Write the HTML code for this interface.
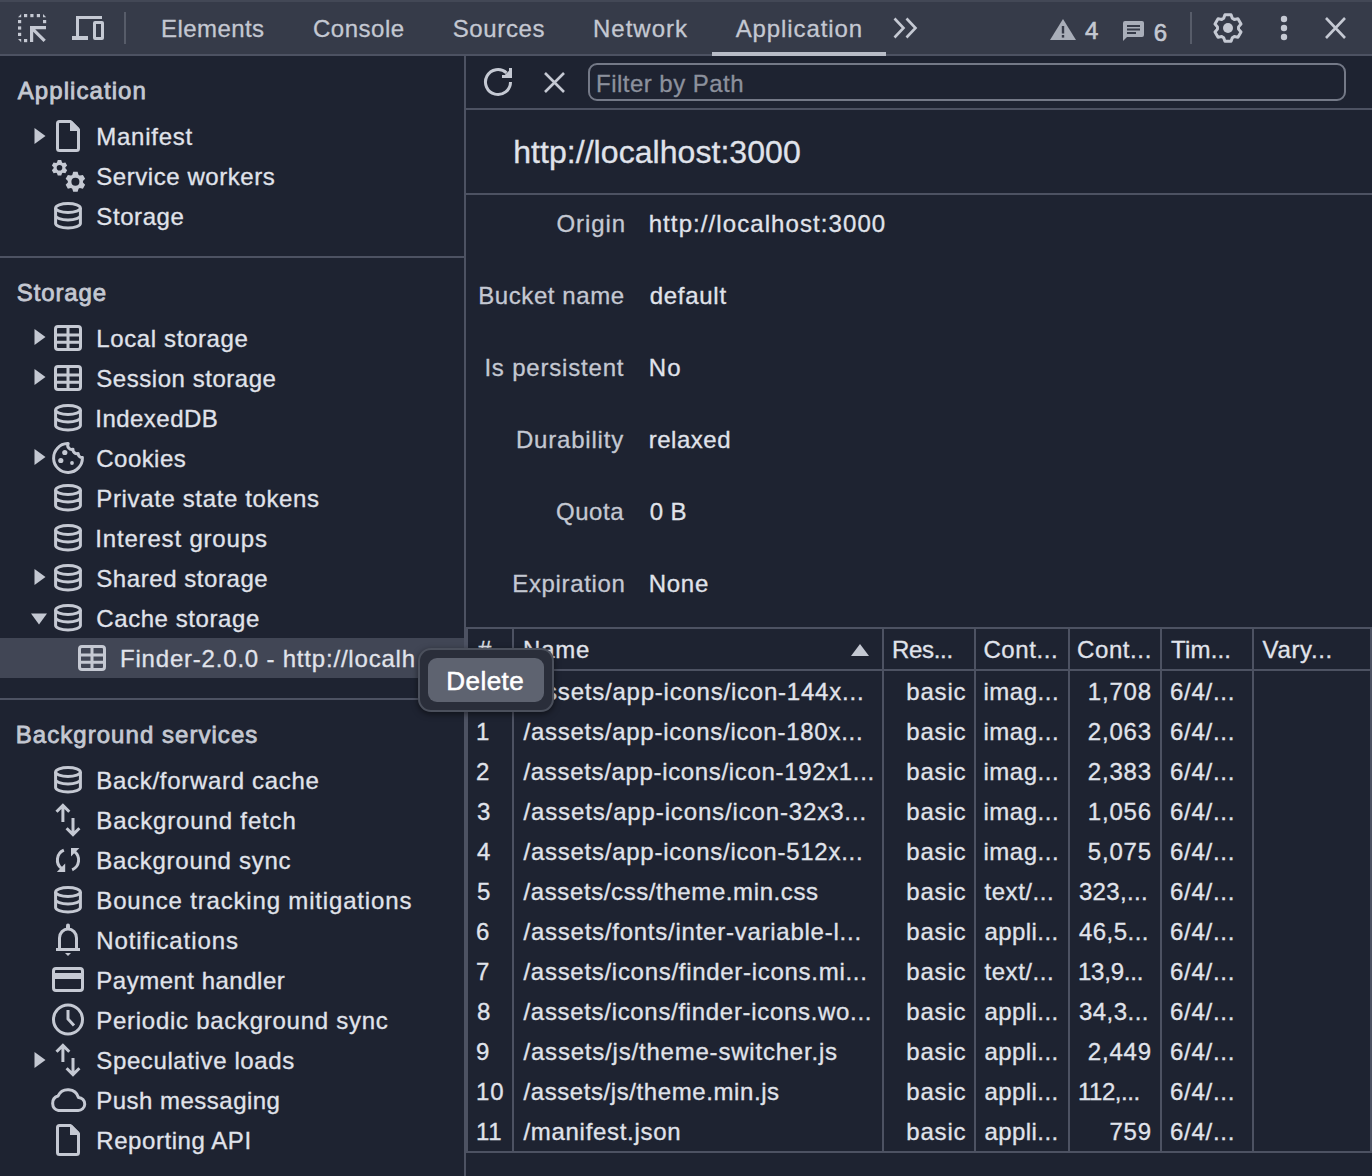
<!DOCTYPE html>
<html><head><meta charset="utf-8"><style>
*{margin:0;padding:0;box-sizing:border-box}
html,body{width:1372px;height:1176px;overflow:hidden;background:#1e2331;font-family:"Liberation Sans",sans-serif}
.a{position:absolute}
.t{white-space:pre;line-height:40px;-webkit-text-stroke:0.3px currentColor}
svg{display:block;overflow:visible}
</style></head><body>
<div class="a" style="left:0px;top:0px;width:1372px;height:54px;background:#363b49;"></div>
<div class="a" style="left:0px;top:0px;width:1372px;height:2px;background:#434856;"></div>
<div class="a" style="left:0px;top:54px;width:1372px;height:2px;background:#4d5262;"></div>
<svg class="a" style="left:18px;top:14px" width="28" height="28" viewBox="0 0 28 28"><g fill="#c5c9d3"><rect x="6" y="0" width="3.2" height="3.2"/><rect x="12.3" y="0" width="3.2" height="3.2"/><rect x="18.8" y="0" width="3.2" height="3.2"/><rect x="0" y="6" width="3.2" height="3.2"/><rect x="0" y="12.4" width="3.2" height="3.2"/><rect x="0" y="18.8" width="3.2" height="3.2"/><rect x="6" y="25" width="3.2" height="3.2"/><rect x="25" y="6" width="3.2" height="3.2"/><path d="M0 3.2 3.2 0V3.2Z"/><path d="M25 0 28.2 3.2H25Z"/><path d="M0 25H3.2V28.2Z"/><path d="M12 12H28V15.2H17.2L27.8 25.8 25.5 28.1 15.2 17.8V28H12Z"/></g></svg>
<svg class="a" style="left:72px;top:16px" width="32" height="24" viewBox="0 0 32 24"><g fill="#c5c9d3"><path d="M4 0H30V3H7V20H16V24H0V20H4Z"/><path d="M23 5H30Q32 5 32 7V22Q32 24 30 24H23Q21 24 21 22V7Q21 5 23 5ZM24 8V21H29V8Z"/></g></svg>
<div class="a" style="left:124px;top:12px;width:2px;height:32px;background:#575c69;"></div>
<div class="a t" style="left:161.00px;top:8.68px;font-size:24px;color:#c4c8d2;font-weight:400;letter-spacing:0.429px;">Elements</div>
<div class="a t" style="left:313.00px;top:8.68px;font-size:24px;color:#c4c8d2;font-weight:400;letter-spacing:0.5px;">Console</div>
<div class="a t" style="left:452.70px;top:8.68px;font-size:24px;color:#c4c8d2;font-weight:400;letter-spacing:0.633px;">Sources</div>
<div class="a t" style="left:593.00px;top:8.68px;font-size:24px;color:#c4c8d2;font-weight:400;letter-spacing:1.0px;">Network</div>
<div class="a t" style="left:735.70px;top:8.68px;font-size:24px;color:#c4c8d2;font-weight:400;letter-spacing:0.89px;">Application</div>
<div class="a" style="left:712px;top:52px;width:174px;height:4px;background:#b8bcc7;"></div>
<svg class="a" style="left:893px;top:17px" width="27" height="22" viewBox="0 0 27 22"><g fill="none" stroke="#c5c9d3" stroke-width="2.6" stroke-linejoin="miter"><path d="M1.5 1.5 10.5 11 1.5 20.5"/><path d="M13.5 1.5 22.5 11 13.5 20.5"/></g></svg>
<svg class="a" style="left:1050px;top:19px" width="26" height="21" viewBox="0 0 26 21"><path fill="#a9aeb9" d="M13 0 26 21H0Z"/><rect x="11.8" y="7" width="2.4" height="7.5" fill="#363b49"/><rect x="11.8" y="16" width="2.4" height="2.6" fill="#363b49"/></svg>
<div class="a t" style="left:1085.00px;top:10.68px;font-size:24px;color:#c4c8d2;font-weight:400;letter-spacing:0.8px;-webkit-text-stroke:0.6px currentColor;">4</div>
<svg class="a" style="left:1123px;top:21px" width="21" height="20" viewBox="0 0 21 20"><path fill="#a9aeb9" d="M2 0H19Q21 0 21 2V14Q21 16 19 16H4L0 20V2Q0 0 2 0Z"/><g fill="#363b49"><rect x="4" y="4" width="13" height="2"/><rect x="4" y="7.5" width="13" height="2"/><rect x="4" y="11" width="9" height="2"/></g></svg>
<div class="a t" style="left:1153.70px;top:12.68px;font-size:24px;color:#c4c8d2;font-weight:400;letter-spacing:0.8px;-webkit-text-stroke:0.6px currentColor;">6</div>
<div class="a" style="left:1190px;top:12px;width:2px;height:32px;background:#575c69;"></div>
<svg class="a" style="left:1212px;top:12px" width="32" height="32" viewBox="0 0 32 32"><path fill="none" stroke="#c5c9d3" stroke-width="3" stroke-linejoin="round" d="M11.69 6.32 L12.94 2.75 L19.06 2.75 L20.31 6.32 L22.23 7.42 L25.95 6.72 L29.01 12.02 L26.54 14.89 L26.54 17.11 L29.01 19.98 L25.95 25.28 L22.23 24.58 L20.31 25.68 L19.06 29.25 L12.94 29.25 L11.69 25.68 L9.77 24.58 L6.05 25.28 L2.99 19.98 L5.46 17.11 L5.46 14.89 L2.99 12.02 L6.05 6.72 L9.77 7.42 Z"/><circle cx="16" cy="16" r="5" fill="#c5c9d3"/></svg>
<svg class="a" style="left:1280px;top:15px" width="8" height="26" viewBox="0 0 8 26"><g fill="#c5c9d3"><circle cx="4" cy="4" r="3.2"/><circle cx="4" cy="13" r="3.2"/><circle cx="4" cy="22" r="3.2"/></g></svg>
<svg class="a" style="left:1324px;top:17px" width="23" height="22" viewBox="0 0 23 22"><path stroke="#c5c9d3" stroke-width="2.6" d="M2 1 21 21M21 1 2 21"/></svg>
<div class="a" style="left:0px;top:256px;width:464px;height:2px;background:#4d5262;"></div>
<div class="a" style="left:0px;top:698px;width:464px;height:2px;background:#4d5262;"></div>
<div class="a" style="left:0px;top:638px;width:464px;height:40px;background:#414655;"></div>
<div class="a" style="left:464px;top:56px;width:2px;height:1120px;background:#4d5262;"></div>
<div class="a t" style="left:17.80px;top:70.68px;font-size:24px;color:#c4c8d2;font-weight:400;letter-spacing:1.06px;-webkit-text-stroke:0.8px currentColor;">Application</div>
<svg class="a" style="left:33.6px;top:128px" width="12" height="16" viewBox="0 0 12 16"><path fill="#c4c8d2" d="M0.5 0 11.5 8 0.5 16Z"/></svg>
<svg class="a" style="left:56px;top:120px" width="24" height="32" viewBox="0 0 24 32"><path fill="none" stroke="#c5c9d3" stroke-width="3" stroke-linejoin="round" d="M3.5 1.5H14.5L22.5 9.5V28.5Q22.5 30.5 20.5 30.5H3.5Q1.5 30.5 1.5 28.5V3.5Q1.5 1.5 3.5 1.5Z"/><path fill="#c5c9d3" d="M14 1H16L23 8V11H14Z"/></svg>
<div class="a t" style="left:96.30px;top:116.68px;font-size:24px;color:#e0e3eb;font-weight:400;letter-spacing:0.743px;">Manifest</div>
<svg class="a" style="left:50px;top:158px" width="38" height="36" viewBox="0 0 38 36"><g fill="#c5c9d3" fill-rule="evenodd"><path d="M6.96 4.47 L7.77 1.99 L11.23 1.99 L12.04 4.47 L12.84 4.94 L15.40 4.40 L17.13 7.39 L15.38 9.34 L15.38 10.26 L17.13 12.21 L15.40 15.20 L12.84 14.66 L12.04 15.13 L11.23 17.61 L7.77 17.61 L6.96 15.13 L6.16 14.66 L3.60 15.20 L1.87 12.21 L3.62 10.26 L3.62 9.34 L1.87 7.39 L3.60 4.40 L6.16 4.94 Z M12.30 9.80 A2.8 2.8 0 1 0 6.70 9.80 A2.8 2.8 0 1 0 12.30 9.80 Z"/><path d="M22.25 16.88 L23.19 13.84 L27.61 13.84 L28.55 16.88 L29.81 17.61 L32.92 16.91 L35.13 20.73 L32.97 23.07 L32.97 24.53 L35.13 26.87 L32.92 30.69 L29.81 29.99 L28.55 30.72 L27.61 33.76 L23.19 33.76 L22.25 30.72 L20.99 29.99 L17.88 30.69 L15.67 26.87 L17.83 24.53 L17.83 23.07 L15.67 20.73 L17.88 16.91 L20.99 17.61 Z M29.40 23.80 A4.0 4.0 0 1 0 21.40 23.80 A4.0 4.0 0 1 0 29.40 23.80 Z"/></g></svg>
<div class="a t" style="left:96.30px;top:156.68px;font-size:24px;color:#e0e3eb;font-weight:400;letter-spacing:0.55px;">Service workers</div>
<svg class="a" style="left:54px;top:202px" width="28" height="28" viewBox="0 0 28 28"><g fill="none" stroke="#c5c9d3" stroke-width="3"><ellipse cx="14" cy="6" rx="12.4" ry="4.4"/><path d="M1.6 6V21.5A12.4 4.4 0 0 0 26.4 21.5V6M1.6 13.5A12.4 4.4 0 0 0 26.4 13.5"/></g></svg>
<div class="a t" style="left:96.30px;top:196.68px;font-size:24px;color:#e0e3eb;font-weight:400;letter-spacing:0.583px;">Storage</div>
<div class="a t" style="left:16.80px;top:272.68px;font-size:24px;color:#c4c8d2;font-weight:400;letter-spacing:0.883px;-webkit-text-stroke:0.8px currentColor;">Storage</div>
<svg class="a" style="left:33.6px;top:329px" width="12" height="16" viewBox="0 0 12 16"><path fill="#c4c8d2" d="M0.5 0 11.5 8 0.5 16Z"/></svg>
<svg class="a" style="left:54px;top:325px" width="28" height="26" viewBox="0 0 28 26"><g fill="none" stroke="#c5c9d3" stroke-width="3"><rect x="1.5" y="1.5" width="25" height="23" rx="2.5"/><path d="M14 2V25M2 10H26M2 17.3H26"/></g></svg>
<div class="a t" style="left:96.30px;top:318.68px;font-size:24px;color:#e0e3eb;font-weight:400;letter-spacing:0.625px;">Local storage</div>
<svg class="a" style="left:33.6px;top:369px" width="12" height="16" viewBox="0 0 12 16"><path fill="#c4c8d2" d="M0.5 0 11.5 8 0.5 16Z"/></svg>
<svg class="a" style="left:54px;top:365px" width="28" height="26" viewBox="0 0 28 26"><g fill="none" stroke="#c5c9d3" stroke-width="3"><rect x="1.5" y="1.5" width="25" height="23" rx="2.5"/><path d="M14 2V25M2 10H26M2 17.3H26"/></g></svg>
<div class="a t" style="left:96.30px;top:358.68px;font-size:24px;color:#e0e3eb;font-weight:400;letter-spacing:0.536px;">Session storage</div>
<svg class="a" style="left:54px;top:404px" width="28" height="28" viewBox="0 0 28 28"><g fill="none" stroke="#c5c9d3" stroke-width="3"><ellipse cx="14" cy="6" rx="12.4" ry="4.4"/><path d="M1.6 6V21.5A12.4 4.4 0 0 0 26.4 21.5V6M1.6 13.5A12.4 4.4 0 0 0 26.4 13.5"/></g></svg>
<div class="a t" style="left:95.30px;top:398.68px;font-size:24px;color:#e0e3eb;font-weight:400;letter-spacing:0.463px;">IndexedDB</div>
<svg class="a" style="left:33.6px;top:449px" width="12" height="16" viewBox="0 0 12 16"><path fill="#c4c8d2" d="M0.5 0 11.5 8 0.5 16Z"/></svg>
<svg class="a" style="left:52px;top:442px" width="32" height="32" viewBox="0 0 32 32"><g fill="none" stroke="#c5c9d3" stroke-width="3"><path d="M15.5 1.6A14.4 14.4 0 1 0 30.4 15.6 4 4 0 0 1 26.2 11.5 4 4 0 0 1 21 7.2 4 4 0 0 1 16.2 1.6Z" stroke-linejoin="round"/></g><g fill="#c5c9d3"><circle cx="12.8" cy="10.5" r="2.6"/><circle cx="8.8" cy="18.5" r="2.6"/><circle cx="20" cy="21" r="1.9"/></g></svg>
<div class="a t" style="left:96.30px;top:438.68px;font-size:24px;color:#e0e3eb;font-weight:400;letter-spacing:0.45px;">Cookies</div>
<svg class="a" style="left:54px;top:484px" width="28" height="28" viewBox="0 0 28 28"><g fill="none" stroke="#c5c9d3" stroke-width="3"><ellipse cx="14" cy="6" rx="12.4" ry="4.4"/><path d="M1.6 6V21.5A12.4 4.4 0 0 0 26.4 21.5V6M1.6 13.5A12.4 4.4 0 0 0 26.4 13.5"/></g></svg>
<div class="a t" style="left:96.30px;top:478.68px;font-size:24px;color:#e0e3eb;font-weight:400;letter-spacing:0.632px;">Private state tokens</div>
<svg class="a" style="left:54px;top:524px" width="28" height="28" viewBox="0 0 28 28"><g fill="none" stroke="#c5c9d3" stroke-width="3"><ellipse cx="14" cy="6" rx="12.4" ry="4.4"/><path d="M1.6 6V21.5A12.4 4.4 0 0 0 26.4 21.5V6M1.6 13.5A12.4 4.4 0 0 0 26.4 13.5"/></g></svg>
<div class="a t" style="left:95.30px;top:518.68px;font-size:24px;color:#e0e3eb;font-weight:400;letter-spacing:0.821px;">Interest groups</div>
<svg class="a" style="left:33.6px;top:569px" width="12" height="16" viewBox="0 0 12 16"><path fill="#c4c8d2" d="M0.5 0 11.5 8 0.5 16Z"/></svg>
<svg class="a" style="left:54px;top:564px" width="28" height="28" viewBox="0 0 28 28"><g fill="none" stroke="#c5c9d3" stroke-width="3"><ellipse cx="14" cy="6" rx="12.4" ry="4.4"/><path d="M1.6 6V21.5A12.4 4.4 0 0 0 26.4 21.5V6M1.6 13.5A12.4 4.4 0 0 0 26.4 13.5"/></g></svg>
<div class="a t" style="left:96.30px;top:558.68px;font-size:24px;color:#e0e3eb;font-weight:400;letter-spacing:0.562px;">Shared storage</div>
<svg class="a" style="left:31px;top:613px" width="16" height="12" viewBox="0 0 16 12"><path fill="#c4c8d2" d="M0 0.5H16L8 11.5Z"/></svg>
<svg class="a" style="left:54px;top:604px" width="28" height="28" viewBox="0 0 28 28"><g fill="none" stroke="#c5c9d3" stroke-width="3"><ellipse cx="14" cy="6" rx="12.4" ry="4.4"/><path d="M1.6 6V21.5A12.4 4.4 0 0 0 26.4 21.5V6M1.6 13.5A12.4 4.4 0 0 0 26.4 13.5"/></g></svg>
<div class="a t" style="left:96.30px;top:598.68px;font-size:24px;color:#e0e3eb;font-weight:400;letter-spacing:0.575px;">Cache storage</div>
<svg class="a" style="left:78px;top:645px" width="28" height="26" viewBox="0 0 28 26"><g fill="none" stroke="#c5c9d3" stroke-width="3"><rect x="1.5" y="1.5" width="25" height="23" rx="2.5"/><path d="M14 2V25M2 10H26M2 17.3H26"/></g></svg>
<div class="a t" style="left:120.00px;top:638.68px;font-size:24px;color:#e0e3eb;font-weight:400;letter-spacing:0.8px;">Finder-2.0.0 - http://localh</div>
<div class="a t" style="left:15.80px;top:714.68px;font-size:24px;color:#c4c8d2;font-weight:400;letter-spacing:1.039px;-webkit-text-stroke:0.8px currentColor;">Background services</div>
<svg class="a" style="left:54px;top:766px" width="28" height="28" viewBox="0 0 28 28"><g fill="none" stroke="#c5c9d3" stroke-width="3"><ellipse cx="14" cy="6" rx="12.4" ry="4.4"/><path d="M1.6 6V21.5A12.4 4.4 0 0 0 26.4 21.5V6M1.6 13.5A12.4 4.4 0 0 0 26.4 13.5"/></g></svg>
<div class="a t" style="left:96.30px;top:760.68px;font-size:24px;color:#e0e3eb;font-weight:400;letter-spacing:0.7px;">Back/forward cache</div>
<svg class="a" style="left:50px;top:800px" width="36" height="40" viewBox="0 0 36 40"><g fill="none" stroke="#c5c9d3" stroke-width="3"><path d="M12.9 22V6M6.5 11.8 12.9 5.4 19.3 11.8"/><path d="M23 18V34M16.6 28.2 23 34.6 29.4 28.2"/></g></svg>
<div class="a t" style="left:96.30px;top:800.68px;font-size:24px;color:#e0e3eb;font-weight:400;letter-spacing:0.847px;">Background fetch</div>
<svg class="a" style="left:50px;top:842px" width="36" height="36" viewBox="0 0 36 36"><g fill="none" stroke="#c5c9d3" stroke-width="3"><path d="M13.86 8.24 A10.6 10.6 0 0 0 11.47 26.35"/><path d="M22.14 27.76 A10.6 10.6 0 0 0 24.53 9.65"/></g><g fill="#c5c9d3"><path d="M6.8 30H15.2V21.6Z"/><path d="M21 6H29.4L21 14.4Z"/></g></svg>
<div class="a t" style="left:96.30px;top:840.68px;font-size:24px;color:#e0e3eb;font-weight:400;letter-spacing:0.721px;">Background sync</div>
<svg class="a" style="left:54px;top:886px" width="28" height="28" viewBox="0 0 28 28"><g fill="none" stroke="#c5c9d3" stroke-width="3"><ellipse cx="14" cy="6" rx="12.4" ry="4.4"/><path d="M1.6 6V21.5A12.4 4.4 0 0 0 26.4 21.5V6M1.6 13.5A12.4 4.4 0 0 0 26.4 13.5"/></g></svg>
<div class="a t" style="left:96.30px;top:880.68px;font-size:24px;color:#e0e3eb;font-weight:400;letter-spacing:0.831px;">Bounce tracking mitigations</div>
<svg class="a" style="left:55px;top:923px" width="26" height="33" viewBox="0 0 26 33"><g fill="none" stroke="#c5c9d3" stroke-width="3"><path d="M4.5 26V15A8.5 9 0 0 1 21.5 15V26"/><path d="M1 26.5H25"/></g><g fill="#c5c9d3"><rect x="11" y="0.5" width="4" height="6" rx="2"/><path d="M10 30H16L13 33Z"/></g></svg>
<div class="a t" style="left:96.30px;top:920.68px;font-size:24px;color:#e0e3eb;font-weight:400;letter-spacing:0.908px;">Notifications</div>
<svg class="a" style="left:52px;top:967px" width="32" height="25" viewBox="0 0 32 25"><g fill="none" stroke="#c5c9d3" stroke-width="3"><rect x="1.5" y="1.5" width="29" height="22" rx="2.5"/></g><rect x="2" y="6" width="28" height="6" fill="#c5c9d3"/></svg>
<div class="a t" style="left:96.30px;top:960.68px;font-size:24px;color:#e0e3eb;font-weight:400;letter-spacing:0.5px;">Payment handler</div>
<svg class="a" style="left:52px;top:1003px" width="32" height="33" viewBox="0 0 32 33"><g fill="none" stroke="#c5c9d3" stroke-width="3"><circle cx="16" cy="16.5" r="14.5"/><path d="M16 7V16L22 22.5"/></g></svg>
<div class="a t" style="left:96.30px;top:1000.68px;font-size:24px;color:#e0e3eb;font-weight:400;letter-spacing:0.722px;">Periodic background sync</div>
<svg class="a" style="left:33.6px;top:1052px" width="12" height="16" viewBox="0 0 12 16"><path fill="#c4c8d2" d="M0.5 0 11.5 8 0.5 16Z"/></svg>
<svg class="a" style="left:50px;top:1040px" width="36" height="40" viewBox="0 0 36 40"><g fill="none" stroke="#c5c9d3" stroke-width="3"><path d="M12.9 22V6M6.5 11.8 12.9 5.4 19.3 11.8"/><path d="M23 18V34M16.6 28.2 23 34.6 29.4 28.2"/></g></svg>
<div class="a t" style="left:96.30px;top:1040.68px;font-size:24px;color:#e0e3eb;font-weight:400;letter-spacing:0.613px;">Speculative loads</div>
<svg class="a" style="left:50px;top:1087px" width="36" height="25" viewBox="0 0 36 25"><path fill="none" stroke="#c5c9d3" stroke-width="3" stroke-linejoin="round" d="M8.5 23.5H28A6.5 6.5 0 0 0 28.5 10.5 11 11 0 0 0 8 9 7.5 7.5 0 0 0 8.5 23.5Z"/></svg>
<div class="a t" style="left:96.30px;top:1080.68px;font-size:24px;color:#e0e3eb;font-weight:400;letter-spacing:0.477px;">Push messaging</div>
<svg class="a" style="left:56px;top:1124px" width="24" height="32" viewBox="0 0 24 32"><path fill="none" stroke="#c5c9d3" stroke-width="3" stroke-linejoin="round" d="M3.5 1.5H14.5L22.5 9.5V28.5Q22.5 30.5 20.5 30.5H3.5Q1.5 30.5 1.5 28.5V3.5Q1.5 1.5 3.5 1.5Z"/><path fill="#c5c9d3" d="M14 1H16L23 8V11H14Z"/></svg>
<div class="a t" style="left:96.30px;top:1120.68px;font-size:24px;color:#e0e3eb;font-weight:400;letter-spacing:0.558px;">Reporting API</div>
<div class="a" style="left:466px;top:108px;width:906px;height:2px;background:#4d5262;"></div>
<svg class="a" style="left:482px;top:66px" width="32" height="32" viewBox="0 0 32 32"><path fill="none" stroke="#c5c9d3" stroke-width="3" d="M28.5 16A12.5 12.5 0 1 1 24.5 6.86"/><path fill="#c5c9d3" d="M27 2H30V12H20V9H22.8L27 4.8Z"/></svg>
<svg class="a" style="left:543px;top:71px" width="23" height="23" viewBox="0 0 23 23"><path stroke="#c5c9d3" stroke-width="2.6" d="M2 2 21 21M21 2 2 21"/></svg>
<div class="a" style="left:588px;top:63px;width:758px;height:38px;border:2px solid #747987;border-radius:9px"></div>
<div class="a t" style="left:596.00px;top:63.68px;font-size:24px;color:#8c919d;font-weight:400;letter-spacing:0.477px;">Filter by Path</div>
<div class="a t" style="left:513.20px;top:131.91px;font-size:32px;color:#e0e3eb;font-weight:400;letter-spacing:0.055px;">http://localhost:3000</div>
<div class="a" style="left:466px;top:193px;width:906px;height:2px;background:#4d5262;"></div>
<div class="a t" style="left:556.40px;top:203.68px;font-size:24px;color:#c4c8d2;font-weight:400;letter-spacing:0.94px;">Origin</div>
<div class="a t" style="left:648.70px;top:203.68px;font-size:24px;color:#e0e3eb;font-weight:400;letter-spacing:1.085px;">http://localhost:3000</div>
<div class="a t" style="left:478.20px;top:275.68px;font-size:24px;color:#c4c8d2;font-weight:400;letter-spacing:0.59px;">Bucket name</div>
<div class="a t" style="left:649.70px;top:275.68px;font-size:24px;color:#e0e3eb;font-weight:400;letter-spacing:0.717px;">default</div>
<div class="a t" style="left:484.40px;top:347.68px;font-size:24px;color:#c4c8d2;font-weight:400;letter-spacing:0.808px;">Is persistent</div>
<div class="a t" style="left:648.70px;top:347.68px;font-size:24px;color:#e0e3eb;font-weight:400;letter-spacing:1.3px;">No</div>
<div class="a t" style="left:516.00px;top:419.68px;font-size:24px;color:#c4c8d2;font-weight:400;letter-spacing:0.789px;">Durability</div>
<div class="a t" style="left:648.70px;top:419.68px;font-size:24px;color:#e0e3eb;font-weight:400;letter-spacing:0.517px;">relaxed</div>
<div class="a t" style="left:556.00px;top:491.68px;font-size:24px;color:#c4c8d2;font-weight:400;letter-spacing:0.525px;">Quota</div>
<div class="a t" style="left:649.70px;top:491.68px;font-size:24px;color:#e0e3eb;font-weight:400;letter-spacing:0.35px;">0 B</div>
<div class="a t" style="left:512.30px;top:563.68px;font-size:24px;color:#c4c8d2;font-weight:400;letter-spacing:0.644px;">Expiration</div>
<div class="a t" style="left:648.70px;top:563.68px;font-size:24px;color:#e0e3eb;font-weight:400;letter-spacing:0.733px;">None</div>
<div class="a" style="left:466px;top:627px;width:906px;height:2px;background:#4d5262;"></div>
<div class="a" style="left:466px;top:669px;width:906px;height:2px;background:#4d5262;"></div>
<div class="a" style="left:466px;top:1151px;width:906px;height:2px;background:#4d5262;"></div>
<div class="a" style="left:466px;top:627px;width:2px;height:526px;background:#4d5262;"></div>
<div class="a" style="left:1370px;top:627px;width:2px;height:526px;background:#4d5262;"></div>
<div class="a" style="left:512px;top:629px;width:2px;height:522px;background:#4d5262;"></div>
<div class="a" style="left:882px;top:629px;width:2px;height:522px;background:#4d5262;"></div>
<div class="a" style="left:974px;top:629px;width:2px;height:522px;background:#4d5262;"></div>
<div class="a" style="left:1068px;top:629px;width:2px;height:522px;background:#4d5262;"></div>
<div class="a" style="left:1160px;top:629px;width:2px;height:522px;background:#4d5262;"></div>
<div class="a" style="left:1252px;top:629px;width:2px;height:522px;background:#4d5262;"></div>
<div class="a t" style="left:478.00px;top:629.68px;font-size:24px;color:#e0e3eb;font-weight:400;letter-spacing:0.8px;">#</div>
<div class="a t" style="left:523.00px;top:629.68px;font-size:24px;color:#e0e3eb;font-weight:400;letter-spacing:0.8px;">Name</div>
<svg class="a" style="left:851px;top:644px" width="18" height="12" viewBox="0 0 18 12"><path fill="#c4c8d2" d="M9 0 18 12H0Z"/></svg>
<div class="a t" style="left:892.00px;top:629.68px;font-size:24px;color:#e0e3eb;font-weight:400;letter-spacing:-0.32px;">Res...</div>
<div class="a t" style="left:983.40px;top:629.68px;font-size:24px;color:#e0e3eb;font-weight:400;letter-spacing:0.6px;">Cont...</div>
<div class="a t" style="left:1077.00px;top:629.68px;font-size:24px;color:#e0e3eb;font-weight:400;letter-spacing:0.6px;">Cont...</div>
<div class="a t" style="left:1171.00px;top:629.68px;font-size:24px;color:#e0e3eb;font-weight:400;letter-spacing:0.18px;">Tim...</div>
<div class="a t" style="left:1262.60px;top:629.68px;font-size:24px;color:#e0e3eb;font-weight:400;letter-spacing:0.633px;">Vary...</div>
<div class="a t" style="left:477.00px;top:671.68px;font-size:24px;color:#e0e3eb;font-weight:400;letter-spacing:0.8px;">0</div>
<div class="a t" style="left:523.50px;top:671.68px;font-size:24px;color:#e0e3eb;font-weight:400;letter-spacing:0.779px;">/assets/app-icons/icon-144x...</div>
<div class="a t" style="left:906.30px;top:671.68px;font-size:24px;color:#e0e3eb;font-weight:400;letter-spacing:0.8px;">basic</div>
<div class="a t" style="left:983.50px;top:671.68px;font-size:24px;color:#e0e3eb;font-weight:400;letter-spacing:0.517px;">imag...</div>
<div class="a t" style="left:1087.80px;top:671.68px;font-size:24px;color:#e0e3eb;font-weight:400;letter-spacing:0.8px;">1,708</div>
<div class="a t" style="left:1170.00px;top:671.68px;font-size:24px;color:#e0e3eb;font-weight:400;letter-spacing:0.733px;">6/4/...</div>
<div class="a t" style="left:476.00px;top:711.68px;font-size:24px;color:#e0e3eb;font-weight:400;letter-spacing:0.8px;">1</div>
<div class="a t" style="left:523.50px;top:711.68px;font-size:24px;color:#e0e3eb;font-weight:400;letter-spacing:0.748px;">/assets/app-icons/icon-180x...</div>
<div class="a t" style="left:906.30px;top:711.68px;font-size:24px;color:#e0e3eb;font-weight:400;letter-spacing:0.8px;">basic</div>
<div class="a t" style="left:983.50px;top:711.68px;font-size:24px;color:#e0e3eb;font-weight:400;letter-spacing:0.517px;">imag...</div>
<div class="a t" style="left:1087.80px;top:711.68px;font-size:24px;color:#e0e3eb;font-weight:400;letter-spacing:0.8px;">2,063</div>
<div class="a t" style="left:1170.00px;top:711.68px;font-size:24px;color:#e0e3eb;font-weight:400;letter-spacing:0.733px;">6/4/...</div>
<div class="a t" style="left:476.00px;top:751.68px;font-size:24px;color:#e0e3eb;font-weight:400;letter-spacing:0.8px;">2</div>
<div class="a t" style="left:523.50px;top:751.68px;font-size:24px;color:#e0e3eb;font-weight:400;letter-spacing:0.66px;">/assets/app-icons/icon-192x1...</div>
<div class="a t" style="left:906.30px;top:751.68px;font-size:24px;color:#e0e3eb;font-weight:400;letter-spacing:0.8px;">basic</div>
<div class="a t" style="left:983.50px;top:751.68px;font-size:24px;color:#e0e3eb;font-weight:400;letter-spacing:0.517px;">imag...</div>
<div class="a t" style="left:1087.80px;top:751.68px;font-size:24px;color:#e0e3eb;font-weight:400;letter-spacing:0.8px;">2,383</div>
<div class="a t" style="left:1170.00px;top:751.68px;font-size:24px;color:#e0e3eb;font-weight:400;letter-spacing:0.733px;">6/4/...</div>
<div class="a t" style="left:477.00px;top:791.68px;font-size:24px;color:#e0e3eb;font-weight:400;letter-spacing:0.8px;">3</div>
<div class="a t" style="left:523.50px;top:791.68px;font-size:24px;color:#e0e3eb;font-weight:400;letter-spacing:0.866px;">/assets/app-icons/icon-32x3...</div>
<div class="a t" style="left:906.30px;top:791.68px;font-size:24px;color:#e0e3eb;font-weight:400;letter-spacing:0.8px;">basic</div>
<div class="a t" style="left:983.50px;top:791.68px;font-size:24px;color:#e0e3eb;font-weight:400;letter-spacing:0.517px;">imag...</div>
<div class="a t" style="left:1087.80px;top:791.68px;font-size:24px;color:#e0e3eb;font-weight:400;letter-spacing:0.8px;">1,056</div>
<div class="a t" style="left:1170.00px;top:791.68px;font-size:24px;color:#e0e3eb;font-weight:400;letter-spacing:0.733px;">6/4/...</div>
<div class="a t" style="left:477.00px;top:831.68px;font-size:24px;color:#e0e3eb;font-weight:400;letter-spacing:0.8px;">4</div>
<div class="a t" style="left:523.50px;top:831.68px;font-size:24px;color:#e0e3eb;font-weight:400;letter-spacing:0.748px;">/assets/app-icons/icon-512x...</div>
<div class="a t" style="left:906.30px;top:831.68px;font-size:24px;color:#e0e3eb;font-weight:400;letter-spacing:0.8px;">basic</div>
<div class="a t" style="left:983.50px;top:831.68px;font-size:24px;color:#e0e3eb;font-weight:400;letter-spacing:0.517px;">imag...</div>
<div class="a t" style="left:1087.80px;top:831.68px;font-size:24px;color:#e0e3eb;font-weight:400;letter-spacing:0.8px;">5,075</div>
<div class="a t" style="left:1170.00px;top:831.68px;font-size:24px;color:#e0e3eb;font-weight:400;letter-spacing:0.733px;">6/4/...</div>
<div class="a t" style="left:477.00px;top:871.68px;font-size:24px;color:#e0e3eb;font-weight:400;letter-spacing:0.8px;">5</div>
<div class="a t" style="left:523.50px;top:871.68px;font-size:24px;color:#e0e3eb;font-weight:400;letter-spacing:0.604px;">/assets/css/theme.min.css</div>
<div class="a t" style="left:906.30px;top:871.68px;font-size:24px;color:#e0e3eb;font-weight:400;letter-spacing:0.8px;">basic</div>
<div class="a t" style="left:984.50px;top:871.68px;font-size:24px;color:#e0e3eb;font-weight:400;letter-spacing:0.543px;">text/...</div>
<div class="a t" style="left:1078.90px;top:871.68px;font-size:24px;color:#e0e3eb;font-weight:400;letter-spacing:0.333px;">323,...</div>
<div class="a t" style="left:1170.00px;top:871.68px;font-size:24px;color:#e0e3eb;font-weight:400;letter-spacing:0.733px;">6/4/...</div>
<div class="a t" style="left:476.00px;top:911.68px;font-size:24px;color:#e0e3eb;font-weight:400;letter-spacing:0.8px;">6</div>
<div class="a t" style="left:523.50px;top:911.68px;font-size:24px;color:#e0e3eb;font-weight:400;letter-spacing:0.753px;">/assets/fonts/inter-variable-l...</div>
<div class="a t" style="left:906.30px;top:911.68px;font-size:24px;color:#e0e3eb;font-weight:400;letter-spacing:0.8px;">basic</div>
<div class="a t" style="left:984.50px;top:911.68px;font-size:24px;color:#e0e3eb;font-weight:400;letter-spacing:0.429px;">appli...</div>
<div class="a t" style="left:1078.90px;top:911.68px;font-size:24px;color:#e0e3eb;font-weight:400;letter-spacing:0.483px;">46,5...</div>
<div class="a t" style="left:1170.00px;top:911.68px;font-size:24px;color:#e0e3eb;font-weight:400;letter-spacing:0.733px;">6/4/...</div>
<div class="a t" style="left:476.00px;top:951.68px;font-size:24px;color:#e0e3eb;font-weight:400;letter-spacing:0.8px;">7</div>
<div class="a t" style="left:523.50px;top:951.68px;font-size:24px;color:#e0e3eb;font-weight:400;letter-spacing:0.706px;">/assets/icons/finder-icons.mi...</div>
<div class="a t" style="left:906.30px;top:951.68px;font-size:24px;color:#e0e3eb;font-weight:400;letter-spacing:0.8px;">basic</div>
<div class="a t" style="left:984.50px;top:951.68px;font-size:24px;color:#e0e3eb;font-weight:400;letter-spacing:0.543px;">text/...</div>
<div class="a t" style="left:1077.90px;top:951.68px;font-size:24px;color:#e0e3eb;font-weight:400;letter-spacing:-0.183px;">13,9...</div>
<div class="a t" style="left:1170.00px;top:951.68px;font-size:24px;color:#e0e3eb;font-weight:400;letter-spacing:0.733px;">6/4/...</div>
<div class="a t" style="left:477.00px;top:991.68px;font-size:24px;color:#e0e3eb;font-weight:400;letter-spacing:0.8px;">8</div>
<div class="a t" style="left:523.50px;top:991.68px;font-size:24px;color:#e0e3eb;font-weight:400;letter-spacing:0.681px;">/assets/icons/finder-icons.wo...</div>
<div class="a t" style="left:906.30px;top:991.68px;font-size:24px;color:#e0e3eb;font-weight:400;letter-spacing:0.8px;">basic</div>
<div class="a t" style="left:984.50px;top:991.68px;font-size:24px;color:#e0e3eb;font-weight:400;letter-spacing:0.429px;">appli...</div>
<div class="a t" style="left:1078.90px;top:991.68px;font-size:24px;color:#e0e3eb;font-weight:400;letter-spacing:0.483px;">34,3...</div>
<div class="a t" style="left:1170.00px;top:991.68px;font-size:24px;color:#e0e3eb;font-weight:400;letter-spacing:0.733px;">6/4/...</div>
<div class="a t" style="left:476.00px;top:1031.68px;font-size:24px;color:#e0e3eb;font-weight:400;letter-spacing:0.8px;">9</div>
<div class="a t" style="left:523.50px;top:1031.68px;font-size:24px;color:#e0e3eb;font-weight:400;letter-spacing:0.793px;">/assets/js/theme-switcher.js</div>
<div class="a t" style="left:906.30px;top:1031.68px;font-size:24px;color:#e0e3eb;font-weight:400;letter-spacing:0.8px;">basic</div>
<div class="a t" style="left:984.50px;top:1031.68px;font-size:24px;color:#e0e3eb;font-weight:400;letter-spacing:0.429px;">appli...</div>
<div class="a t" style="left:1087.80px;top:1031.68px;font-size:24px;color:#e0e3eb;font-weight:400;letter-spacing:0.8px;">2,449</div>
<div class="a t" style="left:1170.00px;top:1031.68px;font-size:24px;color:#e0e3eb;font-weight:400;letter-spacing:0.733px;">6/4/...</div>
<div class="a t" style="left:476.00px;top:1071.68px;font-size:24px;color:#e0e3eb;font-weight:400;letter-spacing:0.8px;">10</div>
<div class="a t" style="left:523.50px;top:1071.68px;font-size:24px;color:#e0e3eb;font-weight:400;letter-spacing:0.582px;">/assets/js/theme.min.js</div>
<div class="a t" style="left:906.30px;top:1071.68px;font-size:24px;color:#e0e3eb;font-weight:400;letter-spacing:0.8px;">basic</div>
<div class="a t" style="left:984.50px;top:1071.68px;font-size:24px;color:#e0e3eb;font-weight:400;letter-spacing:0.429px;">appli...</div>
<div class="a t" style="left:1077.90px;top:1071.68px;font-size:24px;color:#e0e3eb;font-weight:400;letter-spacing:-0.45px;">112,...</div>
<div class="a t" style="left:1170.00px;top:1071.68px;font-size:24px;color:#e0e3eb;font-weight:400;letter-spacing:0.733px;">6/4/...</div>
<div class="a t" style="left:476.00px;top:1111.68px;font-size:24px;color:#e0e3eb;font-weight:400;letter-spacing:0.8px;">11</div>
<div class="a t" style="left:523.50px;top:1111.68px;font-size:24px;color:#e0e3eb;font-weight:400;letter-spacing:0.692px;">/manifest.json</div>
<div class="a t" style="left:906.30px;top:1111.68px;font-size:24px;color:#e0e3eb;font-weight:400;letter-spacing:0.8px;">basic</div>
<div class="a t" style="left:984.50px;top:1111.68px;font-size:24px;color:#e0e3eb;font-weight:400;letter-spacing:0.429px;">appli...</div>
<div class="a t" style="left:1109.40px;top:1111.68px;font-size:24px;color:#e0e3eb;font-weight:400;letter-spacing:0.8px;">759</div>
<div class="a t" style="left:1170.00px;top:1111.68px;font-size:24px;color:#e0e3eb;font-weight:400;letter-spacing:0.733px;">6/4/...</div>
<div class="a" style="left:418px;top:648px;width:136px;height:64px;background:#2a2e3a;border:2px solid #4b505c;border-radius:13px;box-shadow:0 2px 6px rgba(0,0,0,.5)"></div>
<div class="a" style="left:428px;top:658px;width:116px;height:44px;background:#5e6370;border-radius:9px"></div>
<div class="a t" style="left:446.30px;top:660.99px;font-size:26px;color:#ffffff;font-weight:400;letter-spacing:0.46px;-webkit-text-stroke:0.55px currentColor;">Delete</div>
</body></html>
